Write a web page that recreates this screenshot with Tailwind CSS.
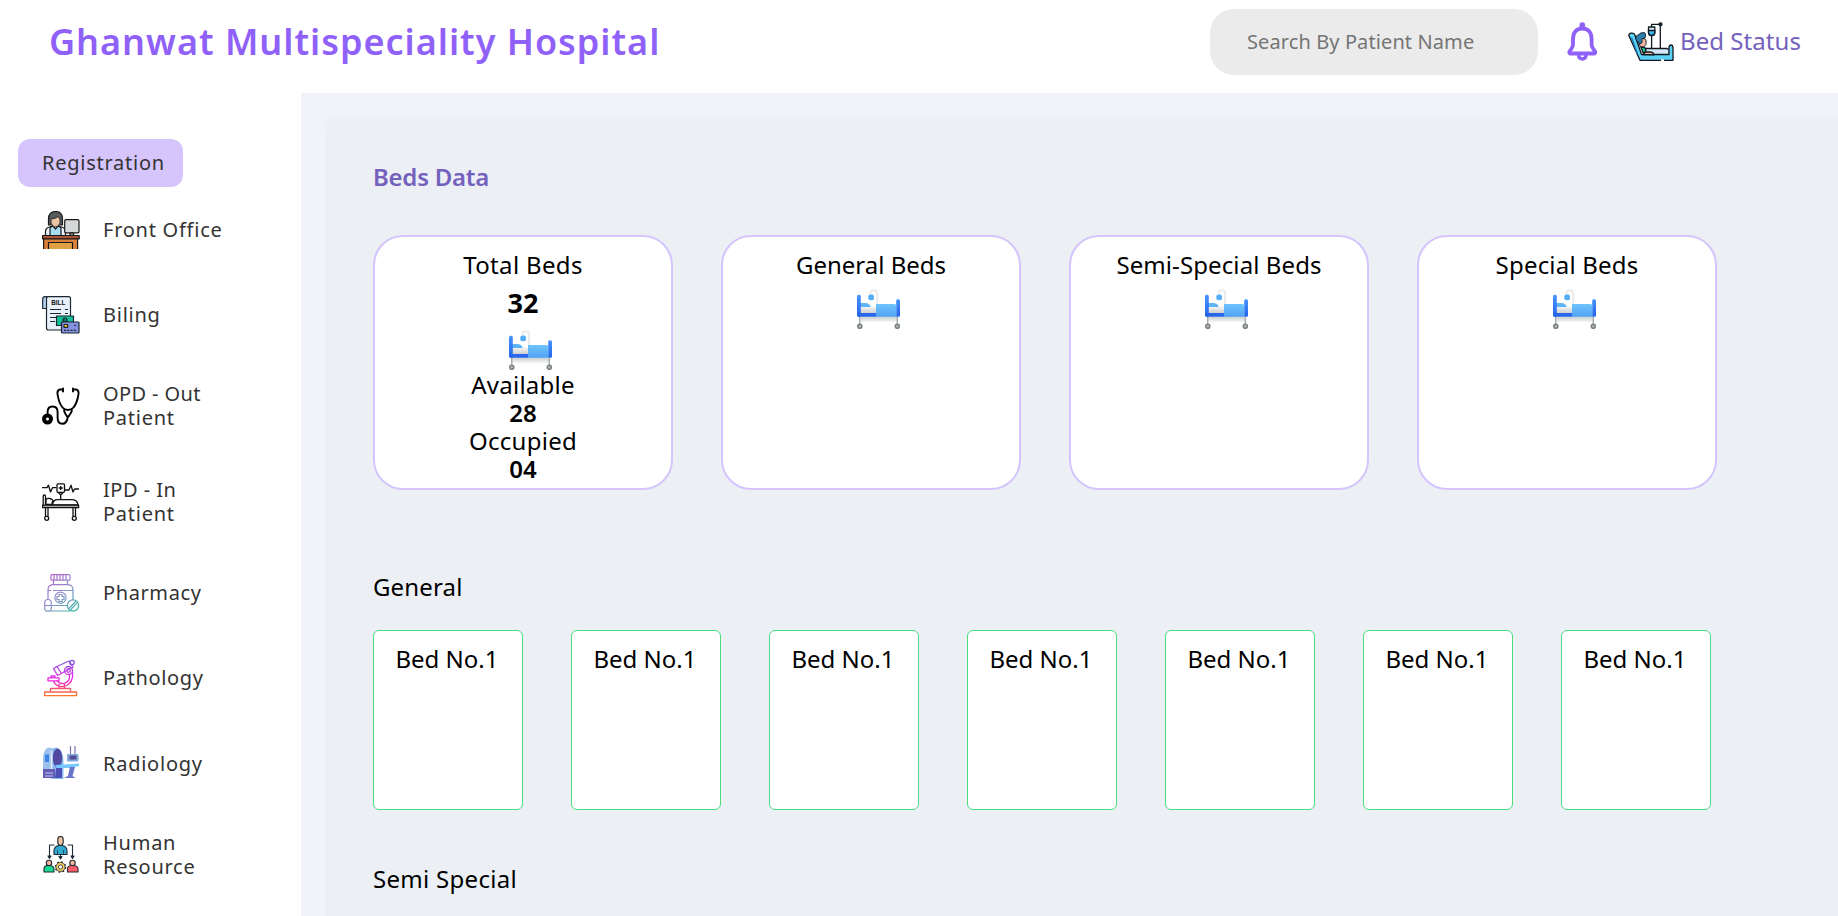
<!DOCTYPE html>
<html lang="en">
<head>
<meta charset="utf-8">
<title>Ghanwat Multispeciality Hospital</title>
<script src="https://cdn.jsdelivr.net/npm/@tailwindcss/browser@4"></script>
</head>
<body class="h-screen overflow-hidden bg-white font-['Noto_Sans',sans-serif] text-black">
<svg class="absolute h-0 w-0">
  <defs>
    <linearGradient id="sheet" x1="0" y1="0" x2="0" y2="1"><stop offset="0" stop-color="#6fc4fd"/><stop offset="1" stop-color="#50a2f5"/></linearGradient>
    <linearGradient id="post" x1="0" y1="0" x2="0" y2="1"><stop offset="0" stop-color="#4894f8"/><stop offset="1" stop-color="#2463eb"/></linearGradient>
    <linearGradient id="matt" x1="0" y1="0" x2="0" y2="1"><stop offset="0" stop-color="#f8f8f8"/><stop offset="1" stop-color="#cfcfcf"/></linearGradient>
    <linearGradient id="shade" x1="0" y1="0" x2="0" y2="1"><stop offset="0" stop-color="#c4cacb"/><stop offset="1" stop-color="#f6f6f6"/></linearGradient>
  </defs>
  <symbol id="bed" viewBox="0 0 45 41">
    <path d="M14.500 5V3.500q0-2 2-2h3q1.500 0 1.500 1.500V16" fill="none" stroke="#ebebeb" stroke-width="2"/>
    <rect x="4" y="27" width="37" height="6" fill="url(#shade)"/>
    <path d="M3.700 27v8M41.300 27v8" stroke="#a7acad" stroke-width="1.500"/>
    <rect x="4" y="17" width="17" height="7" fill="url(#matt)"/>
    <path d="M4 18v-4h5q5 0 5.500 4z" fill="#5fb4f8"/>
    <rect x="12.300" y="5.600" width="5.700" height="5.600" rx="2" fill="#54aef7"/>
    <rect x="1" y="5.700" width="3.800" height="22" rx="1.500" fill="url(#post)"/>
    <rect x="2" y="24" width="19" height="3.700" fill="#2767ec"/>
    <rect x="40.200" y="10.300" width="3.800" height="17.400" rx="1.500" fill="url(#post)"/>
    <path d="M20 27.700V15h18q2.300 0 2.300 2v10.700z" fill="url(#sheet)"/>
    <circle cx="3.800" cy="37.300" r="2" fill="#b9bcbd" stroke="#7b8183" stroke-width="1.600"/>
    <circle cx="41.300" cy="37.300" r="2" fill="#b9bcbd" stroke="#7b8183" stroke-width="1.600"/>
  </symbol>
</svg>

<header class="flex h-[93px] items-start bg-white pl-[49px]">
  <h1 class="mt-[18px] whitespace-nowrap text-[36px] leading-[48px] font-semibold tracking-[0.98px] text-[#9061f9]">Ghanwat Multispeciality Hospital</h1>
  <div class="ml-auto flex">
    <div class="mt-[9px] h-[66px] w-[328px] rounded-[24px] bg-[#ebebeb] pt-[21px] pl-[37px] text-[20px] leading-[24px] tracking-[0.1px] whitespace-nowrap text-[#757575]">Search By Patient Name</div>
    <svg class="mt-[22px] ml-[29px] h-[39px] w-[31px]" viewBox="0 0 31 39" fill="none" stroke="#9061f9">
      <path d="M15.300 6.500C9 6.500 6 11 6 17v5.500c0 2-.6 3-1.800 4.600C2.700 29 2.300 29.500 2.300 30.300c0 .8.600 1.200 1.400 1.200h23.200c.8 0 1.400-.4 1.400-1.200 0-.8-.4-1.300-1.900-3.200-1.200-1.600-1.800-2.600-1.800-4.600V17c0-6-3-10.500-9.300-10.500z" stroke-width="3.800"/>
      <path d="M12.500 5.500V3a2.800 2.800 0 0 1 5.600 0v2.500" fill="#9061f9" stroke="none"/>
      <path d="M11.600 32v1.500a3.700 3.500 0 0 0 7.400 0V32" stroke-width="3.400"/>
    </svg>
    <svg class="mt-[22px] ml-[30px] h-[39px] w-[46px]" viewBox="0 0 46 39" stroke="#111820" stroke-width="1.300" stroke-linejoin="round">
      <path d="M32.300 3v24M23.600 12.500v15" fill="none"/>
      <path d="M23.600 5.500V2.300h8" fill="none"/>
      <circle cx="32.500" cy="2.300" r="1.500" fill="#17384f"/>
      <path d="M20.500 5h6.300v5.500q0 3-3.100 3t-3.200-3z" fill="#d9eefc"/><path d="M20.500 8.500h6.300v2q0 3-3.100 3t-3.200-3z" fill="#39b8ec"/>
      <path d="M17 26.500h22l2.500 1.500v5.500H18z" fill="#d3e8fb"/>
      <path d="M.8 13.500q0-2 2.500-2.400 2.700-.4 3.500 1.600L13.500 32.500H41V25q.5-2 2-2t2 2v13.300H12z" fill="#5ad2f8"/>
      <path d="M3.500 15.500 9.500 32" fill="none" stroke="#1d78a8"/>
      <path d="M9.500 17.500 15 16l3 2v4.500L15.500 25l-3 0z" fill="#f5b7a0" stroke-width=".9"/>
      <path d="M8 18q-.5-5 3-5.500 1-2.300 5.700-1.800 1.700 2 .3 5.300l-3 .8v4l-2 1z" fill="#2c7eae" stroke-width=".9"/>
      <path d="M13 25.500q4-1 4.500 1.500l.7 3.500H15z" fill="#17c98e"/>
      <path d="M15 32.500l2.500-2.500 4 0q4 0 4.500 2.800z" fill="#f5b7a0"/>
      <path d="M33 38.300h3" stroke="#fff" stroke-width="2"/>
    </svg>
    <div class="mt-[26px] mr-[37px] ml-[6px] w-[121px] text-[24px] leading-[30px] tracking-[0.05px] whitespace-nowrap text-[#7461bd]">Bed Status</div>
  </div>
</header>

<div class="flex h-[823px]">
  <aside class="w-[301px] shrink-0 bg-white pt-[46px] text-[20px] leading-[24px] tracking-[0.75px] text-[#333]">
    <div class="ml-[18px] h-[48px] w-[165px] rounded-[12px] bg-[#d6c5fc] pt-[12px] pl-[24px]">Registration</div>
    <nav class="mt-[24px] ml-[42px] flex flex-col gap-[48px]">
      <div class="flex h-[37.500px] items-center gap-[23px]">
        <svg class="h-[38px] w-[38px] shrink-0" viewBox="0 0 38 38" stroke="#181818" stroke-width="1.200" stroke-linejoin="round">
          <path d="M6.500 14V8q0-7.500 7-7.500t7 7.500v6z" fill="#565c5e"/>
          <path d="M3.500 24.500v-4q0-3.500 4-4.500l3-1h6l3 1q4 1 4 4.500v4z" fill="#e9f3fc"/>
          <path d="M8 24.500v-8l3-1.500 2.500 3 2.500-3 3 1.500v8z" fill="#a6dcf0"/>
          <path d="M9 8q5-.5 7-2.500l2 2.500v4q-1.500 4-4.500 4T9 12z" fill="#e8c3a3" stroke-width=".8"/>
          <rect x="22.700" y="8.600" width="14.300" height="13.200" rx="1.300" fill="#d5d8d9"/>
          <path d="M28 22h3.500v2.500H28z" fill="#8e9496"/>
          <rect x="1.600" y="27.500" width="34" height="11" fill="#d9803a"/>
          <rect x="6.500" y="31.500" width="24" height="8" fill="#e2a044"/>
          <rect x=".6" y="24.500" width="36.600" height="3.300" fill="#a8543a"/>
        </svg>
        <span>Front Office</span>
      </div>
      <div class="flex h-[37.500px] items-center gap-[23px]">
        <svg class="h-[38px] w-[38px] shrink-0" viewBox="0 0 38 38" stroke="#1c2630" stroke-width="1.200" stroke-linejoin="round">
          <path d="M4.500 12.500H.7V3q0-2.400 2.500-2.400h2z" fill="#b7d5f3"/>
          <path d="M4.500 2.500q0-1.900 2-1.900h20q2 0 2 2V34H6.500q-2 0-2-2z" fill="#e9f1fb"/>
          <text x="9.300" y="9.200" font-family="Liberation Sans, sans-serif" font-size="7.500" font-weight="700" letter-spacing="0" fill="#111" stroke="none" textLength="14" lengthAdjust="spacingAndGlyphs">BILL</text>
          <path d="M8 13.500h11M23 13.500h3M8 17.500h11M23 17.500h3M8 21.500h6M8 25.500h5" fill="none"/>
          <rect x="14.500" y="20" width="17" height="9.500" fill="#12bf99"/>
          <circle cx="23" cy="24" r="2" fill="#0a7d66"/>
          <rect x="19.500" y="26" width="17.500" height="11" rx=".8" fill="#8590e0"/>
          <rect x="22" y="28.500" width="3.600" height="2.800" fill="#ffd90f"/>
          <path d="M22 34.300h12" stroke-dasharray="2 1.300"/><path d="M32 29.500h2"/>
        </svg>
        <span>Biling</span>
      </div>
      <div class="flex h-[48px] items-center gap-[23px]">
        <svg class="h-[38px] w-[38px] shrink-0" viewBox="0 0 38 38" fill="none" stroke="#000" stroke-width="1.900">
          <path d="M21 .8v4.500M31 .8v4.500M21 2.500h-3q-3 .7-2.500 4.500 1.300 9 5 13.500 2 2.500 5.500 2.500t5.500-2.500q3.700-4.500 5-13.500.5-3.800-2.500-4.500h-3"/>
          <path d="M22 22.500q0 2 1.500 4.500l2.300 3.500 2.400-3.500q1.800-2.500 1.800-4.500M25.800 30q-1 6.800-5.500 6.800-4.700 0-4.700-6V25q0-5.500-5-5.500t-5 5.500v3"/>
          <circle cx="5.500" cy="32" r="3.500" stroke-width="4"/>
        </svg>
        <span class="w-[120px]"><span class="tracking-[0.4px]">OPD - Out</span><br>Patient</span>
      </div>
      <div class="flex h-[48px] items-center gap-[23px]">
        <svg class="h-[38px] w-[38px] shrink-0" viewBox="0 0 38 38" fill="none" stroke="#111" stroke-width="1.300" stroke-linejoin="round">
          <path d="M0 4.700h5l1.500-2.500L8.500 9l2-4.300h4M23 7h4l2-4.800 2 6.800 1.500-3H37"/>
          <rect x="15" y=".8" width="7.500" height="8.500" rx="1"/><path d="M18.700 3v4M16.800 5h4M16.500 9.500l2.200 2.500L21 9.500M18.700 12v4.500"/>
          <path d="M1.200 22V13q0-1 1.100-1t1.200 1v9M4 16.500q1-1.300 3.500-1t3.500 2l-1 2.500 1 1.500H4zM10.500 22q.5-5.300 5-5.300h14q6 0 6.500 5.300z"/>
          <rect x=".6" y="22.200" width="36" height="2.500" fill="#aaa"/>
          <path d="M3.500 25v8.500M6 25v8.500M31 25v8.500M33.500 25v8.500"/>
          <circle cx="4.700" cy="35.300" r="2"/><circle cx="32.300" cy="35.300" r="2"/>
        </svg>
        <span class="w-[100px]"><span class="tracking-[0.5px]">IPD - In</span><br>Patient</span>
      </div>
      <div class="flex h-[37.500px] items-center gap-[23px]">
        <svg class="h-[38px] w-[38px] shrink-0" viewBox="0 0 38 38" fill="none" stroke="url(#phg)" stroke-width="1.200">
          <defs><linearGradient id="phg" gradientUnits="userSpaceOnUse" x1="8" y1="2" x2="34" y2="36"><stop stop-color="#b565cf"/><stop offset=".55" stop-color="#8b95c9"/><stop offset="1" stop-color="#35b5a5"/></linearGradient></defs>
          <rect x="9" y=".7" width="19" height="5.500" rx="1"/>
          <path d="M12 1v5M15 1v5M18 1v5M21 1v5M24 1v5M11.500 6.200v4.300M25.500 6.200v4.300"/>
          <path d="M6 26V16q0-5 5-5.300h15q5 .3 5 5.300v10M6 16.500h3M11 16.500h20M10 31.500h15M9 37h19"/>
          <circle cx="18.500" cy="23.700" r="5.600"/>
          <path d="M17 20.500h3v2h2v3h-2v2h-3v-2h-2v-3h2z"/>
          <rect x="2.700" y="25.500" width="6.600" height="11.700" rx="3.300"/><path d="M2.700 31.500h6.600"/>
          <circle cx="31" cy="31.500" r="5.600"/><path d="M27 34.500l7-7.300M28.500 35.800l6.500-7"/>
        </svg>
        <span class="tracking-[0.6px]">Pharmacy</span>
      </div>
      <div class="flex h-[37.500px] items-center gap-[23px]">
        <svg class="h-[38px] w-[38px] shrink-0" viewBox="0 0 38 38" fill="none" stroke="url(#pag)" stroke-width="1.300" stroke-linejoin="round">
          <defs><linearGradient id="pag" gradientUnits="userSpaceOnUse" x1="0" y1="0" x2="0" y2="38"><stop stop-color="#6c5ce0"/><stop offset=".3" stop-color="#bd3de6"/><stop offset=".55" stop-color="#f022e6"/><stop offset=".8" stop-color="#f55a68"/><stop offset="1" stop-color="#ff7a1c"/></linearGradient></defs>
          <path d="M11.500 9.500l3.500-2 4.500 7-4 2zM15 7.500l12-5.500 4 6-11 6"/>
          <circle cx="30" cy="3.500" r="2.200"/>
          <circle cx="26.500" cy="11.500" r="4"/><circle cx="26.500" cy="11.500" r="1.800"/>
          <path d="M30.500 13q1.500 11-8 14.500h-4q-5-.5-7-5.500M27.500 16q1 6.500-5.500 8.500-4 .5-7-2.500"/>
          <path d="M6 18.800h11v3H6zM9 17h4v1.800H9zM17 25v4.500M22.500 25v4.500M8.500 33v-3.500h20V33M2.600 33h32v3.700h-32z"/>
        </svg>
        <span class="tracking-[0.65px]">Pathology</span>
      </div>
      <div class="flex h-[37.500px] items-center gap-[23px]">
        <svg class="h-[38px] w-[38px] shrink-0" viewBox="0 0 38 38">
          <path d="M9 4q3-2 6-1.500 7 3 6.500 15V34H9z" fill="#8dbbf5"/>
          <ellipse cx="15.500" cy="13" rx="4.700" ry="9.500" fill="#514aa0"/>
          <path d="M1 28V12q1-9 6-9.500 3 0 3.500 2V28z" fill="#9cc2ec"/><path d="M3 9.500h4V17H3z" fill="#3d85ea"/><path d="M9.500 6v21" stroke="#e4eef8" stroke-width="1.500"/>
          <path d="M1 24h12v9H1z" fill="#655bb4"/><path d="M3 28h8M3 31h8" stroke="#bfc9fa"/>
          <path d="M14 23l6-2v12h-7z" fill="#4c50b5"/>
          <path d="M13 20l24-1.500V21l-9 2H15z" fill="#77caff"/>
          <path d="M28 22h5l-2.500 9 3 2H22l4-2z" fill="#6873c9"/>
          <path d="M28.500 1v9M33 1v9" stroke="#7d76b8" stroke-width="1.200"/>
          <rect x="25" y="9" width="11.500" height="7.500" rx="1" fill="#83a9df"/><path d="M27.500 10.500h7v4h-7z" fill="#514c94"/>
        </svg>
        <span>Radiology</span>
      </div>
      <div class="flex h-[48px] items-center gap-[23px]">
        <svg class="h-[38px] w-[38px] shrink-0" viewBox="0 0 38 38" stroke="#222b35" stroke-width="1.100" stroke-linejoin="round">
          <path d="M12.500 9h-5v12.500M25.500 9h5v12.500M18.500 18v4" fill="none"/>
          <path d="M6 20h3l-1.500 2.500zM29 20h3l-1.500 2.500zM17 20.500h3L18.500 23z" fill="#222b35"/>
          <path d="M12 18.500V15q0-4.500 4.500-5.500h4q4.500 1 4.500 5.500v3.500z" fill="#2fa9d2"/>
          <path d="M15.500 14v4.500M21.500 14v4.500" fill="none" stroke-width=".7"/>
          <path d="M15.800 3.500q0-3 2.700-3t2.700 3v3.500q-.7 2.500-2.700 2.500T15.800 7z" fill="#efc2a2"/>
          <path d="M2 36v-3q0-3 3-3.500h3q4 .5 4 3.500v3z" fill="#12dc91"/><circle cx="7" cy="27" r="2.700" fill="#eeb79b"/>
          <path d="M25.500 36v-3q0-3 3.500-3.500h3q4 .5 4 3.500v3z" fill="#ff5c67"/><circle cx="30.500" cy="27" r="2.700" fill="#eeb79b"/>
          <circle cx="18.500" cy="31" r="4.600" fill="#f7cf5e" stroke-width=".8"/><circle cx="18.500" cy="31" r="5.200" fill="none" stroke-width="1.200" stroke-dasharray="1.800 2.280"/>
          <circle cx="18.500" cy="31" r="2.100" fill="#fff" stroke-width=".8"/>
        </svg>
        <span class="w-[100px]">Human<br>Resource</span>
      </div>
    </nav>
  </aside>

  <main class="grow overflow-hidden bg-[#f0f4f9] pt-[24px] pl-[24px]">
    <section class="h-full rounded-tl-[14px] bg-[#ecf0f5] pt-[46px] pl-[48px] text-[24px] leading-[28px] whitespace-nowrap">
      <h2 class="font-semibold tracking-[-0.25px] text-[#7461bd]">Beds Data</h2>
      <div class="mt-[44px] flex gap-[48px]">
        <div class="h-[255px] w-[300px] rounded-[30px] border-2 border-[#d6c5fc] bg-white pt-[14px] text-center">
          <div class="tracking-[0.35px]">Total Beds</div>
          <div class="mt-[6px] text-[27px] leading-[36px] font-bold">32</div>
          <svg class="mt-[9px] ml-[133px] h-[41px] w-[45px]"><use href="#bed"/></svg>
          <div class="tracking-[0.25px]">Available</div>
          <div class="font-semibold">28</div>
          <div class="tracking-[0.25px]">Occupied</div>
          <div class="font-semibold">04</div>
        </div>
        <div class="h-[255px] w-[300px] rounded-[30px] border-2 border-[#d6c5fc] bg-white pt-[14px] text-center">
          <div>General Beds</div>
          <svg class="mt-[10px] ml-[133px] h-[41px] w-[45px]"><use href="#bed"/></svg>
        </div>
        <div class="h-[255px] w-[300px] rounded-[30px] border-2 border-[#d6c5fc] bg-white pt-[14px] text-center">
          <div class="tracking-[0.1px]">Semi-Special Beds</div>
          <svg class="mt-[10px] ml-[133px] h-[41px] w-[45px]"><use href="#bed"/></svg>
        </div>
        <div class="h-[255px] w-[300px] rounded-[30px] border-2 border-[#d6c5fc] bg-white pt-[14px] text-center">
          <div class="tracking-[0.2px]">Special Beds</div>
          <svg class="mt-[10px] ml-[133px] h-[41px] w-[45px]"><use href="#bed"/></svg>
        </div>
      </div>
      <h3 class="mt-[83px] tracking-[0.15px]">General</h3>
      <div class="mt-[29px] flex gap-[48px]">
        <div class="h-[180px] w-[150px] rounded-[6px] border border-[#4ade80] bg-white pt-[14px] pr-[2px] text-center">Bed No.1</div>
        <div class="h-[180px] w-[150px] rounded-[6px] border border-[#4ade80] bg-white pt-[14px] pr-[2px] text-center">Bed No.1</div>
        <div class="h-[180px] w-[150px] rounded-[6px] border border-[#4ade80] bg-white pt-[14px] pr-[2px] text-center">Bed No.1</div>
        <div class="h-[180px] w-[150px] rounded-[6px] border border-[#4ade80] bg-white pt-[14px] pr-[2px] text-center">Bed No.1</div>
        <div class="h-[180px] w-[150px] rounded-[6px] border border-[#4ade80] bg-white pt-[14px] pr-[2px] text-center">Bed No.1</div>
        <div class="h-[180px] w-[150px] rounded-[6px] border border-[#4ade80] bg-white pt-[14px] pr-[2px] text-center">Bed No.1</div>
        <div class="h-[180px] w-[150px] rounded-[6px] border border-[#4ade80] bg-white pt-[14px] pr-[2px] text-center">Bed No.1</div>
      </div>
      <h3 class="mt-[55px] tracking-[0.3px]">Semi Special</h3>
    </section>
  </main>
</div>
</body>
</html>
